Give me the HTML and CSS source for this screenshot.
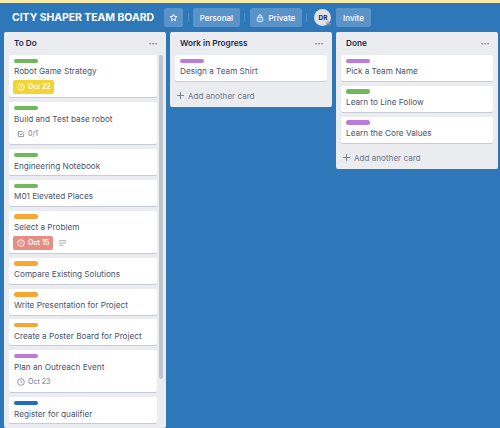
FILE: index.html
```html
<!DOCTYPE html>
<html lang="en">
<head>
<meta charset="utf-8">
<title>City Shaper Team Board</title>
<link rel="stylesheet" href="styles.css">
</head>
<body>
<div class="topline"></div>
<header class="header">
  <h1 class="title">CITY SHAPER TEAM BOARD</h1>
  <button class="btn icon-btn"><svg width="9" height="9" viewBox="0 0 24 24" class="ico"><path d="M12 3l2.700 6 6.300.7-4.700 4.300 1.300 6.500-5.600-3.300-5.600 3.300 1.300-6.500L3 9.700 9.300 9z" fill="none" stroke="#fff" stroke-width="2.600" stroke-linejoin="round"/></svg></button>
  <span class="sep"></span>
  <button class="btn">Personal</button>
  <span class="sep"></span>
  <button class="btn"><svg width="8" height="8" viewBox="0 0 24 24" class="ico"><rect x="4" y="10" width="16" height="12" rx="2.500" fill="none" stroke="#fff" stroke-width="2.800"/><path d="M7.500 10V7a4.500 4.500 0 0 1 9 0v3" fill="none" stroke="#fff" stroke-width="2.800"/><circle cx="12" cy="16" r="2" fill="#fff"/></svg>Private</button>
  <span class="sep sep-wide"></span>
  <span class="avatar">DR<svg class="badge" width="5" height="5" viewBox="0 0 5 5"><path d="M0 1h5M0 2.500h5M0 4h5" stroke="#8a93a6" stroke-width=".8"/></svg></span>
  <button class="btn invite">Invite</button>
</header>
<main class="board">
  <section class="list list-todo">
    <div class="list-head"><h2>To Do</h2><span class="dots">···</span></div>
    <div class="scroll-wrap">
      <div class="cards">
        <article class="card"><i class="label green"></i><p>Robot Game Strategy</p>
          <div class="meta"><span class="due yellow"><svg width="8" height="8" viewBox="0 0 24 24"><circle cx="12" cy="12" r="10" fill="none" stroke="#fff" stroke-width="2.600"/><path d="M12 6.500V12.500l4 2" fill="none" stroke="#fff" stroke-width="2.400"/></svg>Oct 22</span></div></article>
        <article class="card"><i class="label green"></i><p>Build and Test base robot</p>
          <div class="meta"><span class="due plain"><svg width="8" height="8" viewBox="0 0 24 24"><path d="M20 12v6a2 2 0 0 1-2 2H6a2 2 0 0 1-2-2V6a2 2 0 0 1 2-2h9" fill="none" stroke="#6b778c" stroke-width="2.400"/><path d="M8 11l4 4 9-10" fill="none" stroke="#6b778c" stroke-width="2.400"/></svg>0/1</span></div></article>
        <article class="card"><i class="label green"></i><p>Engineering Notebook</p></article>
        <article class="card"><i class="label green"></i><p>M01 Elevated Places</p></article>
        <article class="card"><i class="label orange"></i><p>Select a Problem</p>
          <div class="meta"><span class="due red"><svg width="8" height="8" viewBox="0 0 24 24"><circle cx="12" cy="12" r="10" fill="none" stroke="#fff" stroke-width="2.600"/><path d="M12 6.500V12.500l4 2" fill="none" stroke="#fff" stroke-width="2.400"/></svg>Oct 15</span><svg class="desc" width="7" height="6" viewBox="0 0 7 6"><path d="M0 .8h7M0 3h7M0 5.200h4.500" stroke="#a5adbb" stroke-width="1.100"/></svg></div></article>
        <article class="card"><i class="label orange"></i><p>Compare Existing Solutions</p></article>
        <article class="card"><i class="label orange"></i><p>Write Presentation for Project</p></article>
        <article class="card"><i class="label orange"></i><p>Create a Poster Board for Project</p></article>
        <article class="card"><i class="label purple"></i><p>Plan an Outreach Event</p>
          <div class="meta"><span class="due plain"><svg width="8" height="8" viewBox="0 0 24 24"><circle cx="12" cy="12" r="10" fill="none" stroke="#6b778c" stroke-width="2.200"/><path d="M12 6.500V12.500l4 2" fill="none" stroke="#6b778c" stroke-width="2"/></svg>Oct 23</span></div></article>
        <article class="card"><i class="label blue"></i><p>Register for qualifier</p></article>
      </div>
      <div class="scrollbar"></div>
    </div>
  </section>
  <section class="list">
    <div class="list-head"><h2>Work in Progress</h2><span class="dots">···</span></div>
    <div class="cards">
      <article class="card"><i class="label purple"></i><p>Design a Team Shirt</p></article>
    </div>
    <div class="add"><svg width="7" height="7" viewBox="0 0 7 7"><path d="M3.500 0v7M0 3.500h7" stroke="#6b778c" stroke-width=".9"/></svg>Add another card</div>
  </section>
  <section class="list">
    <div class="list-head"><h2>Done</h2><span class="dots">···</span></div>
    <div class="cards">
      <article class="card"><i class="label purple"></i><p>Pick a Team Name</p></article>
      <article class="card"><i class="label green"></i><p>Learn to Line Follow</p></article>
      <article class="card"><i class="label purple"></i><p>Learn the Core Values</p></article>
    </div>
    <div class="add"><svg width="7" height="7" viewBox="0 0 7 7"><path d="M3.500 0v7M0 3.500h7" stroke="#6b778c" stroke-width=".9"/></svg>Add another card</div>
  </section>
</main>
</body>
</html>
```

FILE: styles.css
```css
* { box-sizing: border-box; }
html, body { margin: 0; height: 100%; overflow: hidden; }
body {
  background: #2e77b9;
  font-family: Inter, "Noto Sans", sans-serif;
  color: #172b4d;
  width: 500px;
  height: 428px;
}
.topline { height: 3px; background: #f6eaa6; }
.header {
  display: flex;
  align-items: center;
  height: 19px;
  margin: 5px 0;
  padding-left: 12px;
}
.title {
  width: 152px;
  margin: 0;
  font-size: 10.400px;
  font-weight: 700;
  color: #fff;
  white-space: nowrap;
}
.btn {
  display: flex;
  align-items: center;
  gap: 4px;
  height: 19px;
  padding: 0 6.700px;
  border: 0;
  border-radius: 2px;
  background: #5a93c9;
  color: #fff;
  font: 500 8px Inter, sans-serif;
}
.icon-btn { width: 19px; padding: 0; justify-content: center; }
.sep { width: 1px; height: 9px; margin: 0 4.500px; background: #4f8cc4; }
.sep-wide { margin-right: 7px; }
.avatar {
  position: relative;
  display: flex;
  align-items: center;
  justify-content: center;
  width: 17px;
  height: 17px;
  margin-right: 5px;
  border-radius: 50%;
  background: #dfe1e6;
  color: #172b4d;
  font-size: 6.500px;
  font-weight: 700;
}
.badge { position: absolute; right: 0; bottom: 0; }
.board {
  display: flex;
  align-items: flex-start;
  gap: 4px;
  padding-left: 4px;
}
.list {
  width: 162px;
  background: #ebecf0;
  border-radius: 2px;
}
.list-todo { height: 396px; overflow: hidden; }
.list-head {
  display: flex;
  justify-content: space-between;
  align-items: center;
  height: 23px;
  padding: 0 8.500px 1px 10px;
}
.list-head h2 { margin: 0; font-size: 8.200px; font-weight: 600; color: #172b4d; }
.dots { font-size: 9px; font-weight: 700; color: #6b778c; }
.scroll-wrap { position: relative; }
.cards {
  display: flex;
  flex-direction: column;
  gap: 4.800px;
  padding: 0 5px;
}
.list-todo .cards { padding-right: 9.300px; }
.scrollbar {
  position: absolute;
  top: 0;
  right: 3px;
  width: 4px;
  height: 324px;
  border-radius: 2px;
  background: #bfc4ce;
}
.card {
  background: #fff;
  border-radius: 2px;
  box-shadow: 0 1px 0 #c7ccd6;
  padding: 3.700px 5px 3.500px;
}
.card p { margin: 0; font-size: 8.200px; line-height: 12px; color: #47546c; white-space: nowrap; }
.label { display: block; width: 23.500px; height: 4.300px; border-radius: 3px; margin-bottom: 2.500px; }
.green { background: #70b85a; }
.orange { background: #f7a533; }
.purple { background: #bd7bd9; }
.blue { background: #1f6fba; }
.meta { display: flex; align-items: center; gap: 6px; margin: 2.300px 0 0 -1px; height: 14px; }
.due {
  display: inline-flex;
  align-items: center;
  gap: 3.500px;
  height: 14px;
  padding: 0 3.500px;
  border-radius: 2px;
  font-size: 7.100px;
  font-weight: 600;
  color: #fff;
}
.yellow { background: #f2d433; }
.red { background: #e58f84; }
.plain { color: #6b778c; font-weight: 400; }
.add {
  display: flex;
  align-items: center;
  gap: 4px;
  height: 26px;
  padding: 4px 0 0 7px;
  font-size: 8.100px;
  color: #6b778c;
}
```
